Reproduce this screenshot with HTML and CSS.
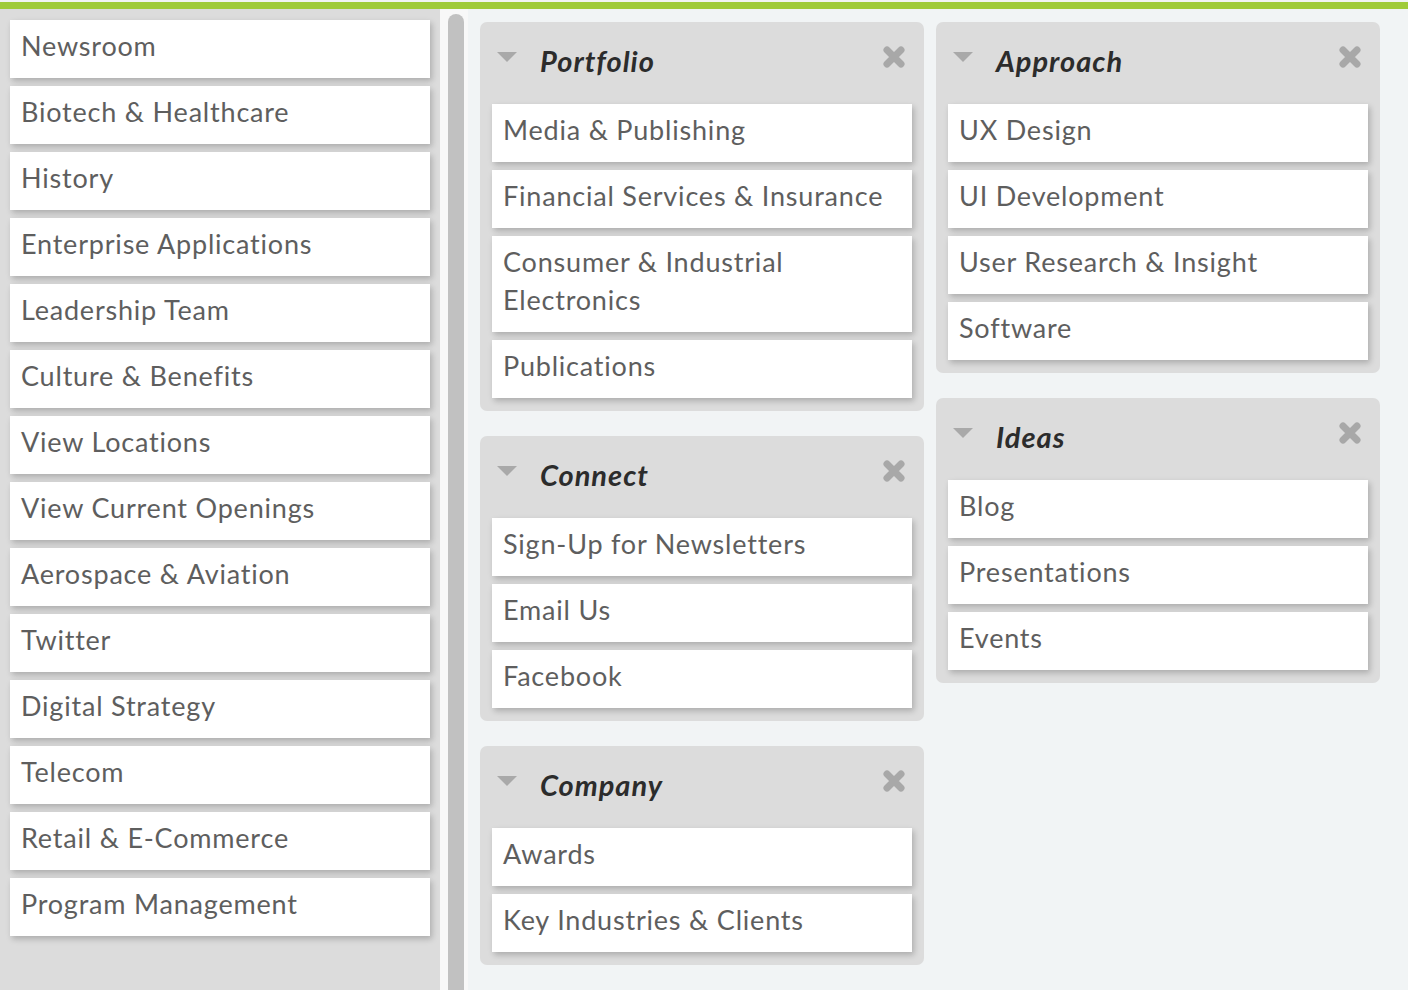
FILE: index.html
```html
<!DOCTYPE html>
<html>
<head>
<meta charset="utf-8">
<title>Menu Builder</title>
<link rel="stylesheet" href="styles.css">
</head>
<body>
<div class="topbar"></div>
<div class="layout">
  <aside class="sidebar">
    <div class="item">Newsroom</div>
    <div class="item">Biotech &amp; Healthcare</div>
    <div class="item">History</div>
    <div class="item">Enterprise Applications</div>
    <div class="item">Leadership Team</div>
    <div class="item">Culture &amp; Benefits</div>
    <div class="item">View Locations</div>
    <div class="item">View Current Openings</div>
    <div class="item">Aerospace &amp; Aviation</div>
    <div class="item">Twitter</div>
    <div class="item">Digital Strategy</div>
    <div class="item">Telecom</div>
    <div class="item">Retail &amp; E-Commerce</div>
    <div class="item">Program Management</div>
  </aside>
  <div class="track"><div class="thumb"></div></div>
  <main class="main">
    <div class="column">
      <section class="panel">
        <header class="panel-head">
          <svg class="caret" width="20" height="10" viewBox="0 0 20 10"><polygon points="0,0 20,0 10,10" /></svg>
          <h2 class="panel-title">Portfolio</h2>
          <svg class="close" width="24" height="24" viewBox="0 0 24 24"><path d="M5 5 L19 19 M19 5 L5 19" /></svg>
        </header>
        <div class="item">Media &amp; Publishing</div>
        <div class="item">Financial Services &amp; Insurance</div>
        <div class="item">Consumer &amp; Industrial<br>Electronics</div>
        <div class="item">Publications</div>
      </section>
      <section class="panel">
        <header class="panel-head">
          <svg class="caret" width="20" height="10" viewBox="0 0 20 10"><polygon points="0,0 20,0 10,10" /></svg>
          <h2 class="panel-title">Connect</h2>
          <svg class="close" width="24" height="24" viewBox="0 0 24 24"><path d="M5 5 L19 19 M19 5 L5 19" /></svg>
        </header>
        <div class="item">Sign-Up for Newsletters</div>
        <div class="item">Email Us</div>
        <div class="item">Facebook</div>
      </section>
      <section class="panel">
        <header class="panel-head">
          <svg class="caret" width="20" height="10" viewBox="0 0 20 10"><polygon points="0,0 20,0 10,10" /></svg>
          <h2 class="panel-title">Company</h2>
          <svg class="close" width="24" height="24" viewBox="0 0 24 24"><path d="M5 5 L19 19 M19 5 L5 19" /></svg>
        </header>
        <div class="item">Awards</div>
        <div class="item">Key Industries &amp; Clients</div>
      </section>
    </div>
    <div class="column">
      <section class="panel">
        <header class="panel-head">
          <svg class="caret" width="20" height="10" viewBox="0 0 20 10"><polygon points="0,0 20,0 10,10" /></svg>
          <h2 class="panel-title">Approach</h2>
          <svg class="close" width="24" height="24" viewBox="0 0 24 24"><path d="M5 5 L19 19 M19 5 L5 19" /></svg>
        </header>
        <div class="item">UX Design</div>
        <div class="item">UI Development</div>
        <div class="item">User Research &amp; Insight</div>
        <div class="item">Software</div>
      </section>
      <section class="panel">
        <header class="panel-head">
          <svg class="caret" width="20" height="10" viewBox="0 0 20 10"><polygon points="0,0 20,0 10,10" /></svg>
          <h2 class="panel-title">Ideas</h2>
          <svg class="close" width="24" height="24" viewBox="0 0 24 24"><path d="M5 5 L19 19 M19 5 L5 19" /></svg>
        </header>
        <div class="item">Blog</div>
        <div class="item">Presentations</div>
        <div class="item">Events</div>
      </section>
    </div>
  </main>
</div>
</body>
</html>
```
FILE: styles.css
```css
html, body {
  margin: 0;
  padding: 0;
  height: 100%;
  overflow: hidden;
}
body {
  background: #f1f4f5;
  font-family: Lato, "Liberation Sans", sans-serif;
  padding-top: 2px;
  box-sizing: border-box;
}
.topbar {
  height: 7px;
  background: #9fcb3a;
}
.layout {
  display: flex;
  height: calc(100% - 7px);
}
.sidebar {
  width: 420px;
  flex: none;
  background: #dcdcdc;
  padding: 11px 10px 0;
  display: flex;
  flex-direction: column;
  gap: 8px;
}
.track {
  width: 16px;
  flex: none;
  background: #f8f8f8;
  padding: 5px 4px 0 8px;
  display: flex;
}
.thumb {
  flex: 1;
  background: #c1c1c1;
  border-radius: 8px 8px 0 0;
}
.main {
  flex: 1;
  display: flex;
  align-items: flex-start;
  gap: 12px;
  padding: 13px 12px 0;
}
.column {
  width: 444px;
  display: flex;
  flex-direction: column;
  gap: 25px;
}
.panel {
  background: #dcdcdc;
  border-radius: 7px;
  padding: 0 12px 13px;
  display: flex;
  flex-direction: column;
  gap: 8px;
}
.panel-head {
  height: 74px;
  display: flex;
  align-items: center;
  padding: 0 6px 8px 5px;
  box-sizing: border-box;
}
.caret {
  flex: none;
  fill: #a9a9a9;
  margin-top: 4px;
}
.panel-title {
  flex: 1;
  margin: 0 0 0 23px;
  padding-top: 12px;
  font-size: 29px;
  line-height: 28px;
  font-weight: 700;
  font-style: italic;
  letter-spacing: 1px;
  color: #2c2c2c;
}
.close {
  flex: none;
  stroke: #a8a8a8;
  stroke-width: 7;
  stroke-linecap: round;
  fill: none;
  margin-top: 3px;
}
.item {
  background: #fff;
  color: #5e5e5e;
  font-size: 27px;
  line-height: 38px;
  letter-spacing: 0.8px;
  padding: 7px 11px 13px;
  box-shadow: 2px 3px 6px rgba(0, 0, 0, 0.22);
}
```
